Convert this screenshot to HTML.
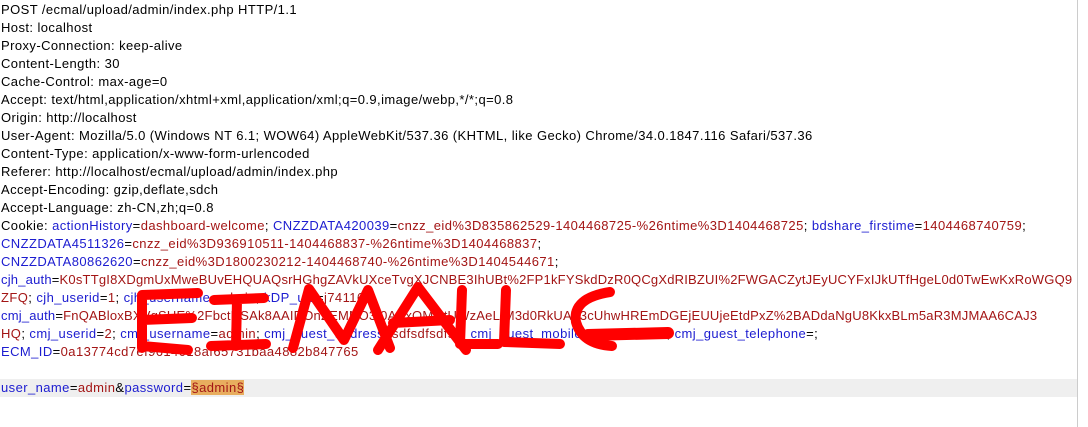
<!DOCTYPE html>
<html><head><meta charset="utf-8"><style>
html,body{margin:0;padding:0;background:#fff;width:1088px;height:427px;overflow:hidden;position:relative}
#t{position:absolute;left:1px;top:1px;font-family:"Liberation Sans",sans-serif;font-size:13px;letter-spacing:0.42px;line-height:18px;color:#000;white-space:pre;width:1075px;overflow:hidden}
.k{color:#1c1cd0}.v{color:#a31515}
.tight{letter-spacing:0.2px}
.hl{position:absolute;left:0;top:379px;width:1077px;height:18px;background:#efefef}
.pw{background:#e8ad5e}
.sb{position:absolute;left:1077px;top:0;width:1px;height:427px;background:#ccc}
svg{position:absolute;left:0;top:0}
</style></head><body>
<div class="hl"></div>
<div class="sb"></div>
<div id="t">POST /ecmal/upload/admin/index.php HTTP/1.1
Host: localhost
Proxy-Connection: keep-alive
Content-Length: 30
Cache-Control: max-age=0
Accept: text/html,application/xhtml+xml,application/xml;q=0.9,image/webp,*/*;q=0.8
Origin: http://localhost
User-Agent: Mozilla/5.0 (Windows NT 6.1; WOW64) AppleWebKit/537.36 (KHTML, like Gecko) Chrome/34.0.1847.116 Safari/537.36
Content-Type: application/x-www-form-urlencoded
Referer: http://localhost/ecmal/upload/admin/index.php
Accept-Encoding: gzip,deflate,sdch
Accept-Language: zh-CN,zh;q=0.8
Cookie: <span class="k">actionHistory</span>=<span class="v">dashboard-welcome</span>; <span class="k">CNZZDATA420039</span>=<span class="v">cnzz_eid%3D835862529-1404468725-%26ntime%3D1404468725</span>; <span class="k">bdshare_firstime</span>=<span class="v">1404468740759</span>;
<span class="k">CNZZDATA4511326</span>=<span class="v">cnzz_eid%3D936910511-1404468837-%26ntime%3D1404468837</span>;
<span class="k">CNZZDATA80862620</span>=<span class="v">cnzz_eid%3D1800230212-1404468740-%26ntime%3D1404544671</span>;
<span class="tight"><span class="k">cjh_auth</span>=<span class="v">K0sTTgI8XDgmUxMweBUvEHQUAQsrHGhgZAVkUXceTvgXJCNBE3IhUBt%2FP1kFYSkdDzR0QCgXdRIBZUI%2FWGACZytJEyUCYFxIJkUTfHgeL0d0TwEwKxRoWGQ9</span></span>
<span class="v">ZFQ</span>; <span class="k">cjh_userid</span>=<span class="v">1</span>; <span class="k">cjh_username</span>=<span class="v">admin</span>; <span class="k">kDP_uid</span>=<span class="v">j74116</span>;
<span class="tight"><span class="k">cmj_auth</span>=<span class="v">FnQABloxBXVqSUE%2FbctHSAk8AAIDOnZEMNO3f0AAxQMGtUWzAeLIM3d0RkUAY3cUhwHREmDGEjEUUjeEtdPxZ%2BADdaNgU8KkxBLm5aR3MJMAA6CAJ3</span></span>
<span class="v">HQ</span>; <span class="k">cmj_userid</span>=<span class="v">2</span>; <span class="k">cmj_username</span>=<span class="v">admin</span>; <span class="k">cmj_guest_address</span>=<span class="v">sdfsdfsdfsd</span>; <span class="k">cmj_guest_mobile</span>=<span class="v">1000000000</span>; <span class="k">cmj_guest_telephone</span>=;
<span class="k">ECM_ID</span>=<span class="v">0a13774cd7ef9614018af65731baa4882b847765</span>

<span class="k">user_name</span>=<span class="v">admin</span>&amp;<span class="k">password</span>=<span class="v pw">§admin§</span></div>
<svg width="1088" height="427" viewBox="0 0 1088 427" fill="none" stroke="#f00" stroke-linecap="round" stroke-linejoin="round" stroke-width="10">
<path d="M142 296 L142 348 M142 295 L198 293 M142 320 L192 318 M142 346 L188 350"/>
<path d="M214 300 L264 298 M237 300 L236 346 M211 346 L266 344"/>
<path d="M293 348 L309 289 L344 340 L368 290 L390 348"/>
<path d="M378 350 L418 287 L466 350 M393 323 L450 320"/>
<path d="M462 290 L460 344 L498 344"/>
<path d="M506 290 L504 342 L560 344"/>
<path d="M610 292 Q572 298 576 322 Q582 344 612 346"/>
<path d="M588 335 L668 333" stroke-width="12"/>
</svg>
</body></html>
